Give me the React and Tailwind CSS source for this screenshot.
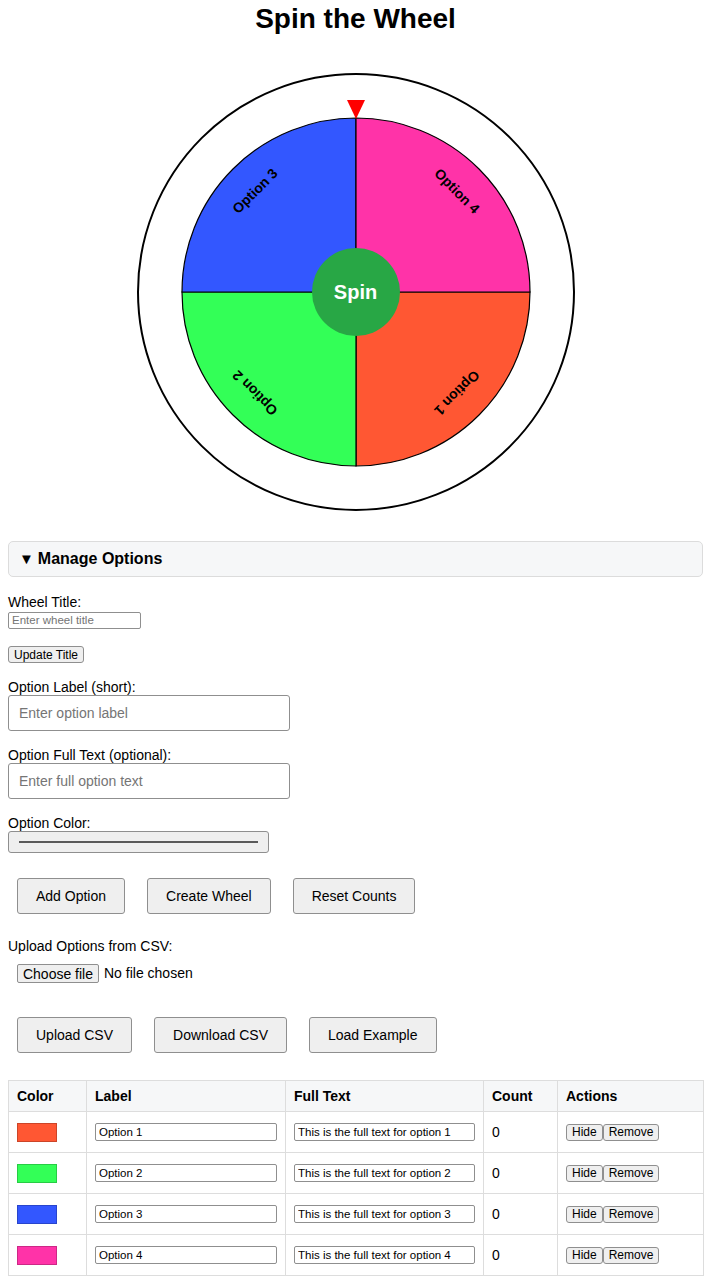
import React, { useState } from 'react';

const initialOptions = [
  { label: 'Option 1', full: 'This is the full text for option 1', color: '#FF5733', count: 0 },
  { label: 'Option 2', full: 'This is the full text for option 2', color: '#33FF57', count: 0 },
  { label: 'Option 3', full: 'This is the full text for option 3', color: '#3357FF', count: 0 },
  { label: 'Option 4', full: 'This is the full text for option 4', color: '#FF33A8', count: 0 },
];

const Wheel = ({ options }) => {
  const cx = 175;
  const cy = 175;
  const r = 174;
  const slice = (Math.PI * 2) / options.length;

  return (
    <svg width="350" height="350" viewBox="0 0 350 350" className="block">
      {options.map((opt, i) => {
        const a0 = i * slice;
        const a1 = (i + 1) * slice;
        const x0 = cx + r * Math.cos(a0);
        const y0 = cy + r * Math.sin(a0);
        const x1 = cx + r * Math.cos(a1);
        const y1 = cy + r * Math.sin(a1);
        return (
          <path
            key={opt.label}
            d={`M${cx} ${cy} L${x0} ${y0} A${r} ${r} 0 0 1 ${x1} ${y1} Z`}
            fill={opt.color}
            stroke="#000"
            strokeWidth="1.2"
          />
        );
      })}
      {options.map((opt, i) => {
        const mid = (i + 0.5) * slice;
        const tx = cx + 143 * Math.cos(mid);
        const ty = cy + 143 * Math.sin(mid);
        const deg = (mid * 180) / Math.PI + 90;
        return (
          <text
            key={opt.label + '-t'}
            x={tx}
            y={ty}
            transform={`rotate(${deg} ${tx} ${ty})`}
            textAnchor="middle"
            dominantBaseline="central"
            fontFamily="'Liberation Sans', Arial, sans-serif"
            fontWeight="bold"
            fontSize="14"
            fill="#000"
          >
            {opt.label}
          </text>
        );
      })}
    </svg>
  );
};

const btn = 'h-[36px] px-[18px] text-[14px] bg-[#efefef] border border-[#8f8f8f] rounded-[3px] leading-none';
const smallBtn = 'h-[17px] px-[5px] text-[12px] bg-[#efefef] border border-[#8f8f8f] rounded-[3px] leading-none align-middle';

export default function App() {
  const [options] = useState(initialOptions);

  return (
    <div className="font-['Liberation_Sans',Arial,sans-serif] text-black bg-white min-h-[1280px] px-[8px]">
      <h1 className="pt-[3px] text-center text-[28px] leading-[32px] font-bold">Spin the Wheel</h1>

      {/* wheel */}
      <div className="mt-[38px] mx-auto w-[438px] h-[438px] rounded-full border-2 border-black flex items-center justify-center">
        <div className="relative w-[350px] h-[350px]">
          <Wheel options={options} />
          <svg width="18" height="19" viewBox="0 0 18 19" className="absolute left-[166px] top-[-17px]">
            <polygon points="0,0 18,0 9,19" fill="#ff0000" />
          </svg>
          <button className="absolute left-[131px] top-[131px] w-[88px] h-[88px] rounded-full bg-[#28a745] text-white font-bold text-[20px]">
            Spin
          </button>
        </div>
      </div>

      {/* manage options */}
      <div className="mt-[30px] h-[36px] border border-[#dcdcdc] rounded-[5px] bg-[#f6f7f8] flex items-center pl-[10px] text-[16px] font-bold">
        <span className="text-[15px] mr-[4px]">▼</span>Manage Options
      </div>

      <div className="text-[14px]">
        <div className="mt-[17px] leading-[16px]">Wheel Title:</div>
        <input
          type="text"
          placeholder="Enter wheel title"
          className="block mt-[2px] w-[133px] h-[17px] px-[3px] text-[11.5px] border border-[#8f8f8f] rounded-[2px] placeholder:text-[#757575]"
        />
        <button className={`block mt-[17px] ${smallBtn}`}>Update Title</button>

        <div className="mt-[16px] leading-[16px]">Option Label (short):</div>
        <input
          type="text"
          placeholder="Enter option label"
          className="block w-[282px] h-[36px] px-[10px] text-[14px] border border-[#8f8f8f] rounded-[3px] placeholder:text-[#757575]"
        />

        <div className="mt-[16px] leading-[16px]">Option Full Text (optional):</div>
        <input
          type="text"
          placeholder="Enter full option text"
          className="block w-[282px] h-[36px] px-[10px] text-[14px] border border-[#8f8f8f] rounded-[3px] placeholder:text-[#757575]"
        />

        <div className="mt-[16px] leading-[16px]">Option Color:</div>
        <div className="w-[261px] h-[22px] bg-[#efefef] border border-[#8f8f8f] rounded-[3px] flex items-center px-[10px]">
          <div className="h-[2px] w-full bg-[#5a5a5a]" />
        </div>

        <div className="mt-[25px] ml-[9px] flex gap-[22px]">
          <button className={btn}>Add Option</button>
          <button className={btn}>Create Wheel</button>
          <button className={btn}>Reset Counts</button>
        </div>

        <div className="mt-[24px] leading-[16px]">Upload Options from CSV:</div>
        <div className="mt-[10px] ml-[9px] flex items-center h-[19px]">
          <button className="h-[19px] w-[82px] text-[14px] bg-[#efefef] border border-[#8f8f8f] rounded-[2px] leading-none">
            Choose file
          </button>
          <span className="ml-[5px]">No file chosen</span>
        </div>

        <div className="mt-[34px] ml-[9px] flex gap-[22px]">
          <button className={btn}>Upload CSV</button>
          <button className={btn}>Download CSV</button>
          <button className={btn}>Load Example</button>
        </div>

        <table className="mt-[27px] w-[695px] table-fixed border-collapse">
          <colgroup>
            <col className="w-[78px]" />
            <col className="w-[199px]" />
            <col className="w-[198px]" />
            <col className="w-[74px]" />
            <col className="w-[146px]" />
          </colgroup>
          <thead>
            <tr className="h-[31px] bg-[#f6f7f8]">
              <th className="border border-[#dddddd] px-[8px] text-left font-bold">Color</th>
              <th className="border border-[#dddddd] px-[8px] text-left font-bold">Label</th>
              <th className="border border-[#dddddd] px-[8px] text-left font-bold">Full Text</th>
              <th className="border border-[#dddddd] px-[8px] text-left font-bold">Count</th>
              <th className="border border-[#dddddd] px-[8px] text-left font-bold">Actions</th>
            </tr>
          </thead>
          <tbody>
            {options.map((opt) => (
              <tr key={opt.label} className="h-[41px]">
                <td className="border border-[#dddddd] px-[8px] align-middle">
                  <div className="w-[40px] h-[19px] border border-black/20" style={{ backgroundColor: opt.color }} />
                </td>
                <td className="border border-[#dddddd] px-[8px] align-middle">
                  <input
                    type="text"
                    defaultValue={opt.label}
                    className="block w-full h-[18px] px-[3px] text-[11.5px] border border-[#8f8f8f] rounded-[2px]"
                  />
                </td>
                <td className="border border-[#dddddd] px-[8px] align-middle">
                  <input
                    type="text"
                    defaultValue={opt.full}
                    className="block w-full h-[18px] px-[3px] text-[11.5px] border border-[#8f8f8f] rounded-[2px]"
                  />
                </td>
                <td className="border border-[#dddddd] px-[8px] align-middle">{opt.count}</td>
                <td className="border border-[#dddddd] px-[8px] align-middle">
                  <div className="flex">
                    <button className={smallBtn}>Hide</button>
                    <button className={smallBtn}>Remove</button>
                  </div>
                </td>
              </tr>
            ))}
          </tbody>
        </table>
      </div>
    </div>
  );
}
